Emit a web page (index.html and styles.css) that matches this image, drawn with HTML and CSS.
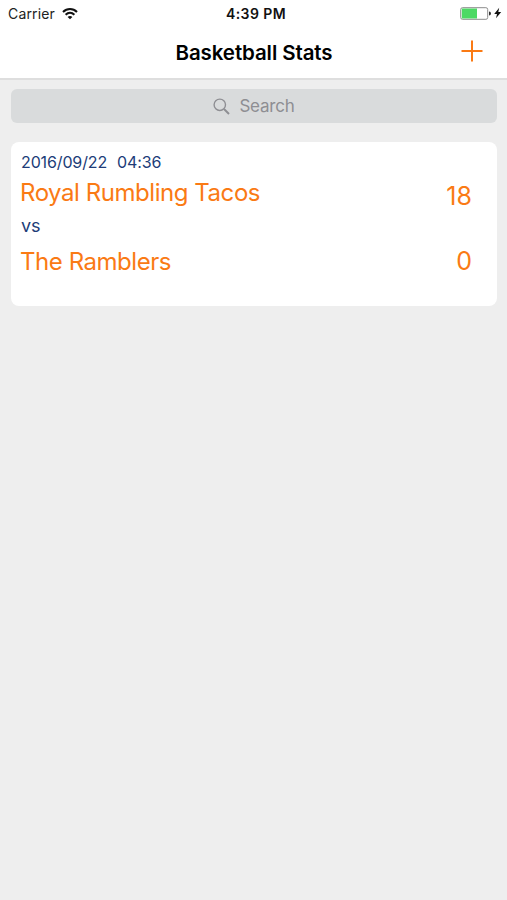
FILE: index.html
```
<!DOCTYPE html>
<html lang="en">
<head>
    <meta charset="UTF-8">
    <title>Basketball Stats</title>
    <link rel="stylesheet" href="styles.css">
</head>
<body>
    <header class="header">
        <div class="status">
            <div class="carrier">
                <span>Carrier</span>
                <svg class="wifi" width="16" height="12" viewBox="0 0 16 12" fill="none" stroke="#111" stroke-width="2">
                    <path d="M1 4C5 0 11 0 15 4M3.6 6.7C6.2 4.2 9.8 4.2 12.4 6.7"/>
                    <path d="M8 11.3L5.6 8.9C7 7.7 9 7.7 10.4 8.9Z" fill="#111" stroke="none"/>
                </svg>
            </div>
            <span class="time">4:39 PM</span>
            <div class="power">
                <svg width="42" height="14" viewBox="0 0 42 14">
                    <rect x=".7" y=".7" width="27" height="11.6" rx="1.8" fill="#fff" stroke="#8c8c8c"/>
                    <path d="M1.8 1.5H17v10H1.8Z" fill="#4cd964"/>
                    <path d="M29 4.5q2 .2 2 2t-2 2Z" fill="#333"/>
                    <path d="M39.2 .8L34.2 6.9H37L36 11.2L41.2 4.9H38.3Z" fill="#111"/>
                </svg>
            </div>
        </div>
        <div class="nav">
            <h1 class="title">Basketball Stats</h1>
            <a class="add">
                <svg width="22" height="22" viewBox="0 0 22 22" fill="none" stroke="#fa7a14" stroke-width="2">
                    <path d="M11 .5V21.5M.5 11H21.5"/>
                </svg>
            </a>
        </div>
    </header>

    <div class="search">
        <svg width="17" height="17" viewBox="0 0 17 17" fill="none" stroke="#8e8e93" stroke-width="1.4">
            <circle cx="6.8" cy="6.8" r="5.7"/>
            <path d="M11 11L16 16" stroke-width="1.9"/>
        </svg>
        <span>Search</span>
    </div>

    <div class="game">
        <div class="date"><span>2016/09/22</span><span>04:36</span></div>
        <div class="row">
            <span class="team home">Royal Rumbling Tacos</span>
            <span class="score">18</span>
        </div>
        <div class="vs">vs</div>
        <div class="row">
            <span class="team away">The Ramblers</span>
            <span class="score">0</span>
        </div>
    </div>
</body>
</html>
```
FILE: styles.css
```
body {
    margin: 0;
    background: #eeeeee;
    font-family: Inter, "Liberation Sans", sans-serif;
}
.header {
    height: 80px;
    box-sizing: border-box;
    background: #fff;
    border-bottom: 2px solid #dedede;
}
.status {
    display: grid;
    grid-template-columns: 1fr auto 1fr;
    align-items: center;
    height: 27px;
    padding: 0 5px 0 8px;
    font-size: 14px;
    color: #222;
}
.carrier {
    display: flex;
    align-items: center;
    gap: 7px;
    letter-spacing: 0.15px;
}
.time {
    padding-left: 2px;
    font-weight: 600;
    letter-spacing: 0.4px;
    color: #111;
}
.power {
    display: flex;
    justify-content: flex-end;
}
.nav {
    display: grid;
    grid-template-columns: 1fr auto 1fr;
    align-items: center;
    height: 50px;
}
.title {
    grid-column: 2;
    margin: 0;
    padding-left: 1px;
    font-size: 20.5px;
    font-weight: 600;
    letter-spacing: -0.1px;
    color: #000;
}
.add {
    display: flex;
    justify-content: flex-end;
    padding: 0 24px 2px 0;
}
.search {
    display: flex;
    align-items: center;
    justify-content: center;
    gap: 9px;
    height: 34px;
    margin: 9px 11px 0 11px;
    border-radius: 6px;
    background: #d9dbdc;
    color: #8e8e93;
    font-size: 17px;
    letter-spacing: -0.2px;
    margin-right: 10px;
}
.game {
    height: 164px;
    margin: 19px 10px 0 11px;
    padding: 10px 25px 0 10px;
    box-sizing: border-box;
    border-radius: 8px;
    background: #fff;
}
.date {
    display: flex;
    gap: 10px;
    font-size: 16px;
    line-height: 20px;
    letter-spacing: -0.13px;
    color: #203c78;
}
.row {
    display: flex;
    justify-content: space-between;
    align-items: flex-end;
    height: 40px;
    font-size: 24px;
    line-height: 30px;
    color: #fa7a14;
}
.team {
    margin-left: -1px;
    letter-spacing: -0.45px;
}
.score {
    font-size: 25px;
    line-height: 32px;
}
.home {
    padding-bottom: 4px;
}
.vs {
    height: 25px;
    font-size: 18px;
    line-height: 28px;
    color: #203c78;
}
```
